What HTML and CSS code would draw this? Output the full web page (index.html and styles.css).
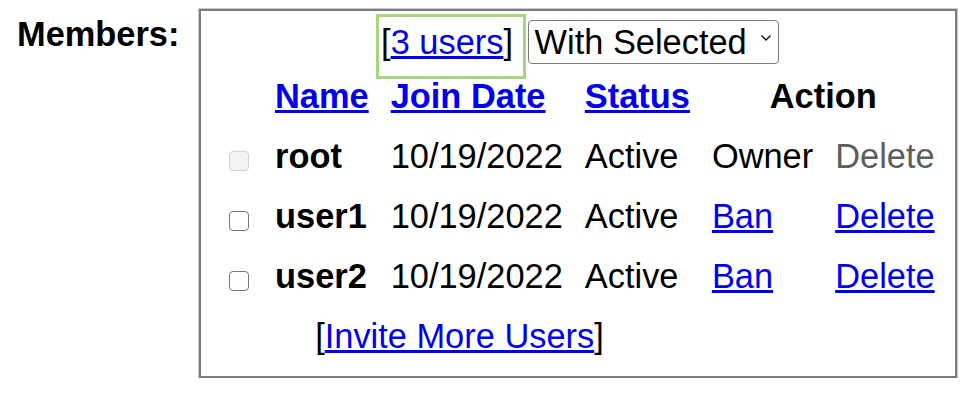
FILE: index.html
```html
<!DOCTYPE html>
<html lang="en">
<head>
  <meta charset="UTF-8">
  <meta name="viewport" content="width=device-width, initial-scale=1.0">
  <title>Group Members</title>
  <link rel="stylesheet" href="styles.css">
</head>
<body>
  <div class="field">
    <div class="field-label">Members:</div>
    <div class="members-box">
      <table class="members">
        <tr class="toolbar">
          <td colspan="6"><span class="user-count">[<a href="#">3 users</a>] </span><span class="select-wrap"><select aria-label="Bulk action"><option>With Selected</option><option>Ban</option><option>Delete</option></select><svg class="chevron" width="10" height="6" viewBox="0 0 10 6" aria-hidden="true"><path d="M1 1 L5 5 L9 1" fill="none" stroke="#000" stroke-width="1.3" stroke-linecap="round" stroke-linejoin="round"/></svg></span></td>
        </tr>
        <tr class="head">
          <th></th>
          <th><a href="#">Name</a></th>
          <th><a href="#">Join Date</a></th>
          <th><a href="#">Status</a></th>
          <th colspan="2" class="action-head">Action</th>
        </tr>
        <tr>
          <td class="pick"><input type="checkbox" disabled aria-label="Select root"></td>
          <td class="name">root</td>
          <td>10/19/2022</td>
          <td>Active</td>
          <td>Owner</td>
          <td class="muted">Delete</td>
        </tr>
        <tr>
          <td class="pick"><input type="checkbox" aria-label="Select user1"></td>
          <td class="name">user1</td>
          <td>10/19/2022</td>
          <td>Active</td>
          <td><a href="#">Ban</a></td>
          <td><a href="#">Delete</a></td>
        </tr>
        <tr>
          <td class="pick"><input type="checkbox" aria-label="Select user2"></td>
          <td class="name">user2</td>
          <td>10/19/2022</td>
          <td>Active</td>
          <td><a href="#">Ban</a></td>
          <td><a href="#">Delete</a></td>
        </tr>
        <tr>
          <td colspan="4" class="invite">[<a href="#">Invite More Users</a>]</td>
          <td colspan="2"></td>
        </tr>
      </table>
    </div>
  </div>
</body>
</html>
```

FILE: styles.css
```css
body {
  margin: 0;
  font-family: "Liberation Sans", Arial, sans-serif;
  font-size: 34.4px;
  line-height: 40px;
  color: #000;
  background: #fff;
}
a {
  color: #0000ee;
  text-decoration: underline;
}
.field {
  display: flex;
  align-items: flex-start;
}
.field-label {
  font-weight: bold;
  width: 182px;
  padding: 14px 0 0 17px;
}
.members-box {
  box-sizing: border-box;
  width: 758px;
  margin-top: 9px;
  padding-bottom: 10px;
  border: 2px solid #7c7c7c;
  box-shadow: 0 0 0 1px #c9c9c9;
}
.members {
  border-collapse: separate;
  border-spacing: 0;
  margin-left: 17px;
  font-size: inherit;
  line-height: inherit;
}
.members td,
.members th {
  padding: 10px 11px;
  text-align: left;
  white-space: nowrap;
}
.members .toolbar td {
  padding: 9px 15px 2px 11px;
  text-align: center;
}
.user-count {
  position: relative;
}
/* green highlight drawn round the user count */
.user-count::after {
  content: "";
  position: absolute;
  left: -5px;
  right: -3px;
  top: -9px;
  bottom: -18px;
  border: 3px solid #a6d67e;
}
.select-wrap {
  position: relative;
  display: inline-block;
  margin-left: 5px;
  vertical-align: baseline;
}
.select-wrap select {
  -webkit-appearance: none;
  appearance: none;
  box-sizing: border-box;
  height: 44px;
  width: 251px;
  margin: 0;
  padding: 0 30px 0 6px;
  border: 1px solid #7a7a7a;
  border-radius: 4px;
  background: #fff;
  color: #000;
  font-family: inherit;
  font-size: 34.4px;
  line-height: 38px;
}
.chevron {
  position: absolute;
  right: 8px;
  top: 15px;
  pointer-events: none;
}
.members th {
  font-weight: bold;
}
.members th.action-head {
  text-align: center;
}
.members .name {
  font-weight: bold;
}
.members .muted {
  color: #5e5e5e;
}
.pick input {
  -webkit-appearance: none;
  appearance: none;
  box-sizing: border-box;
  width: 20px;
  height: 20px;
  margin: 0 4px 0 0;
  vertical-align: -3px;
  border: 1.5px solid #767676;
  border-radius: 4px;
  background: #fff;
}
.pick input:disabled {
  border-color: #d3d3d3;
  background: #f4f4f4;
}
.members td.invite {
  text-align: center;
}
```
